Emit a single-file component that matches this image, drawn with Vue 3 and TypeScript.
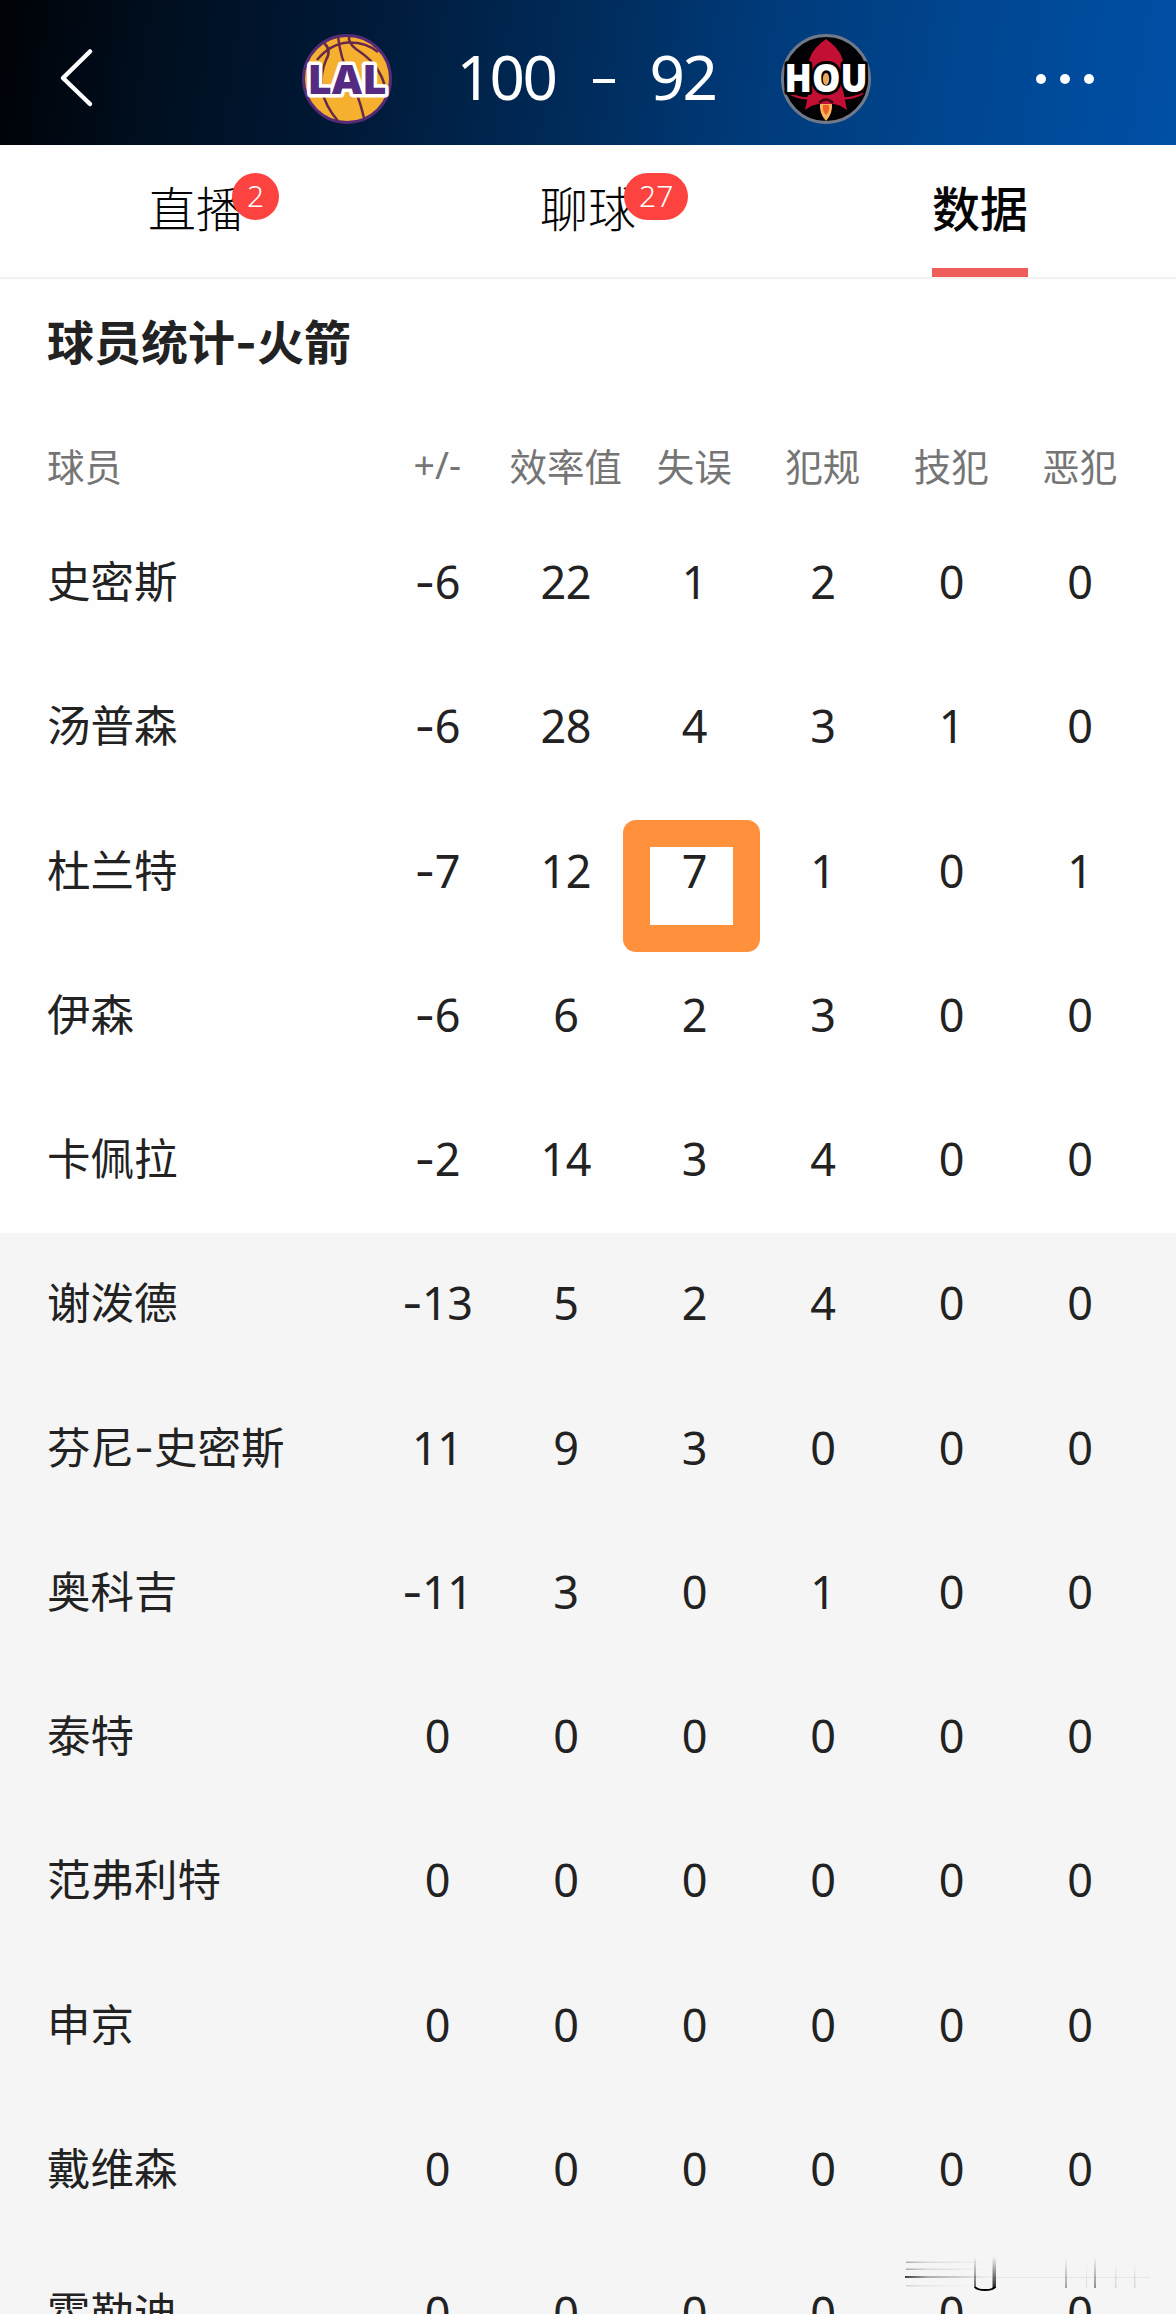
<template>
    <main class="game-page">
        <header class="score-header">
            <svg class="back-icon" viewBox="0 0 40 64">
                <path d="M33 6.5 6 33l27 26" />
            </svg>
            <div class="scoreboard">
                <svg class="team-logo" viewBox="0 0 90 90">
                    <circle cx="45" cy="45" r="43.5" fill="#f5b02f" stroke="#552b78" stroke-width="3" />
                    <g fill="none" stroke="#66294a" stroke-width="2.5">
                        <path d="M15 26Q28 10 46 8.5Q64 8 76 18" />
                        <path d="M22 9Q30 16 24 26Q18 40 20 56Q23 72 36 87" />
                        <path d="M36 2Q38 22 47 42Q57 62 62 84" />
                        <path d="M47 2Q46 9 54 15Q72 27 77 38Q83 48 83 56" />
                    </g>
                    <text class="logo-text lal" x="45" y="60" textLength="79" lengthAdjust="spacingAndGlyphs">LAL</text>
                </svg>
                <div class="score">
                    <span class="points">100</span>
                    <span class="divider"></span>
                    <span class="points">92</span>
                </div>
                <svg class="team-logo" viewBox="0 0 90 90">
                    <circle cx="45" cy="45" r="43.5" fill="#020103" stroke="#70798a" stroke-width="3" />
                    <path d="M45 5Q24 20 28 38V56L24 76Q32 70 38 70H52Q58 70 66 76L62 56V38Q66 20 45 5Z" fill="#c40f34" />
                    <path d="M8 59Q18 65 28 64M82 59Q72 65 62 64" fill="none" stroke="#c40f34" stroke-width="2.5" />
                    <path d="M38 69Q45 62 52 69" fill="none" stroke="#3b0714" stroke-width="2.5" />
                    <path d="M39 70H51Q52 79 45 87Q38 79 39 70Z" fill="#f8b45e" />
                    <path d="M42 71H48Q49 77 45 81Q41 77 42 71Z" fill="#ee6124" />
                    <text class="logo-text hou" x="45" y="58" textLength="83" lengthAdjust="spacingAndGlyphs">HOU</text>
                    <ellipse cx="45" cy="45" rx="3.2" ry="6" fill="#e5a95c" />
                </svg>
            </div>
            <div class="more">
                <i v-for="n in 3" :key="n"></i>
            </div>
        </header>

        <nav class="tabs">
            <a
                v-for="tab in tabs"
                :key="tab.label"
                class="tab"
                :class="{ active: tab.active }"
            >
                <span class="tab-label">
                    {{ tab.label }}
                    <span class="badge" v-if="tab.badge">{{ tab.badge }}</span>
                </span>
            </a>
        </nav>

        <section class="stats">
            <h1>球员统计<span class="dash">-</span>火箭</h1>
            <div class="row head">
                <span class="name">球员</span>
                <span v-for="column in columns" :key="column">{{ column }}</span>
            </div>
            <div
                v-for="player in players"
                :key="player.name"
                class="row"
                :class="{ bench: !player.starter }"
            >
                <span class="name">
                    <template v-for="(part, i) in player.name.split('-')" :key="i"><span v-if="i" class="dash">-</span>{{ part }}</template>
                </span>
                <span
                    v-for="(value, i) in player.stats"
                    :key="i"
                    :class="{ marked: player.marked === i }"
                ><span v-if="value < 0" class="dash">-</span>{{ Math.abs(value) }}</span>
            </div>
        </section>

        <svg class="watermark" viewBox="0 0 260 44">
            <defs>
                <linearGradient id="fade-x">
                    <stop offset="0" stop-color="#000" stop-opacity="0.75" />
                    <stop offset="0.25" stop-color="#000" stop-opacity="0.3" />
                    <stop offset="1" stop-color="#000" stop-opacity="0" />
                </linearGradient>
                <linearGradient id="fade-y" x1="0" y1="0" x2="0" y2="1">
                    <stop offset="0" stop-color="#000" stop-opacity="0" />
                    <stop offset="1" stop-color="#000" stop-opacity="0.85" />
                </linearGradient>
            </defs>
            <g fill="url(#fade-x)">
                <rect x="6" y="10.5" width="80" height="1.5" opacity="0.4" />
                <rect x="6" y="17.5" width="80" height="1.5" opacity="0.4" />
                <rect x="5" y="25" width="90" height="2" />
                <rect x="6" y="34" width="70" height="1.5" opacity="0.2" />
            </g>
            <rect x="95" y="26" width="155" height="1" opacity="0.06" />
            <g fill="url(#fade-y)">
                <rect x="74" y="6" width="2" height="31" opacity="0.7" />
                <rect x="92.5" y="6" width="3.5" height="31" />
                <rect x="165" y="6" width="2" height="31" opacity="0.4" />
                <rect x="186" y="10" width="1" height="27" opacity="0.12" />
                <rect x="194" y="6" width="2" height="31" opacity="0.5" />
                <rect x="215" y="10" width="1.5" height="27" opacity="0.15" />
                <rect x="234" y="10" width="1.5" height="27" opacity="0.15" />
            </g>
            <path d="M75 36Q77 39 85 39Q93 39 95 36" fill="none" stroke="#000" stroke-width="2" />
        </svg>
    </main>
</template>

<script setup lang="ts">
interface Tab {
    label: string;
    badge?: number;
    active?: boolean;
}

interface Player {
    name: string;
    stats: number[];
    starter?: boolean;
    marked?: number;
}

const tabs: Tab[] = [
    { label: '直播', badge: 2 },
    { label: '聊球', badge: 27 },
    { label: '数据', active: true },
];

const columns = ['+/-', '效率值', '失误', '犯规', '技犯', '恶犯'];

const players: Player[] = [
    { name: '史密斯', stats: [-6, 22, 1, 2, 0, 0], starter: true },
    { name: '汤普森', stats: [-6, 28, 4, 3, 1, 0], starter: true },
    { name: '杜兰特', stats: [-7, 12, 7, 1, 0, 1], starter: true, marked: 2 },
    { name: '伊森', stats: [-6, 6, 2, 3, 0, 0], starter: true },
    { name: '卡佩拉', stats: [-2, 14, 3, 4, 0, 0], starter: true },
    { name: '谢泼德', stats: [-13, 5, 2, 4, 0, 0] },
    { name: '芬尼-史密斯', stats: [11, 9, 3, 0, 0, 0] },
    { name: '奥科吉', stats: [-11, 3, 0, 1, 0, 0] },
    { name: '泰特', stats: [0, 0, 0, 0, 0, 0] },
    { name: '范弗利特', stats: [0, 0, 0, 0, 0, 0] },
    { name: '申京', stats: [0, 0, 0, 0, 0, 0] },
    { name: '戴维森', stats: [0, 0, 0, 0, 0, 0] },
    { name: '霍勒迪', stats: [0, 0, 0, 0, 0, 0] },
];
</script>

<style>
body {
    margin: 0;
    background: #fff;
}
</style>

<style scoped>
.game-page {
    position: relative;
    width: 1176px;
    height: 2314px;
    overflow: hidden;
    background: #fefefe;
    color: #222;
    font-family: "Noto Sans", "Noto Sans CJK SC", sans-serif;
}

.score-header {
    display: flex;
    align-items: center;
    justify-content: space-between;
    box-sizing: border-box;
    height: 145px;
    padding: 12px 82px 0 57px;
    background: linear-gradient(98deg, #000206 0%, #000f20 14%, #001937 30%, #002a58 48%, #003b7b 65%, #00458f 80%, #0050a7 100%);
}

.back-icon {
    width: 40px;
    height: 64px;
    margin-bottom: 4px;
    fill: none;
    stroke: #fff;
    stroke-width: 4.5;
    stroke-linecap: round;
    stroke-linejoin: round;
}

.scoreboard {
    display: flex;
    align-items: center;
    justify-content: space-between;
    width: 569px;
    margin-left: 39px;
}

.team-logo {
    width: 90px;
    height: 90px;
    overflow: visible;
}

.logo-text {
    font-family: "Open Sans", "Noto Sans", sans-serif;
    font-weight: 800;
    text-anchor: middle;
    paint-order: stroke;
    stroke-linejoin: round;
}

.lal {
    font-size: 41px;
    fill: #552b82;
    stroke: #fff;
    stroke-width: 7px;
}

.hou {
    font-size: 38px;
    fill: #fff;
    stroke: #000;
    stroke-width: 6px;
}

.score {
    display: flex;
    align-items: center;
    height: 90px;
    color: #fff;
    font-size: 62px;
    line-height: 84px;
}

.points {
    margin-top: -6px;
    letter-spacing: -2.5px;
}

.divider {
    width: 22px;
    height: 4px;
    margin: 4px 34px 0 38px;
    background: #fff;
}

.more {
    display: flex;
    gap: 14px;
}

.more i {
    width: 10px;
    height: 10px;
    border-radius: 50%;
    background: #fff;
}

.tabs {
    display: grid;
    grid-template-columns: repeat(3, 1fr);
    height: 132px;
    border-bottom: 2px solid #f2f2f4;
}

.tab {
    display: flex;
    justify-content: center;
    color: #050505;
    font-family: "Noto Sans CJK SC", sans-serif;
    font-size: 48px;
    font-weight: 300;
    line-height: 123px;
}

.tab-label {
    position: relative;
    box-sizing: border-box;
    height: 132px;
}

.active .tab-label {
    border-bottom: 9px solid #ed5e5a;
    font-weight: 500;
}

.badge {
    position: absolute;
    top: 28px;
    left: calc(100% - 12px);
    min-width: 17px;
    height: 47px;
    padding: 0 15px;
    border-radius: 24px;
    background: #fd433f;
    color: #fff;
    font-family: "Noto Sans", sans-serif;
    font-size: 30px;
    line-height: 46px;
    text-align: center;
}

.stats h1 {
    margin: 0;
    padding: 30px 48px 0 47px;
    font-size: 47px;
    font-weight: 700;
    line-height: 66px;
}

.dash {
    font-family: Inter, sans-serif;
    line-height: 1;
}

.row {
    display: grid;
    grid-template-columns: 1fr repeat(6, 128.5px);
    align-items: center;
    box-sizing: border-box;
    height: 144.25px;
    padding: 0 32px 5px 47px;
    font-size: 45px;
    text-align: center;
    letter-spacing: -0.5px;
}

.row .name {
    padding-bottom: 4px;
    font-size: 43.5px;
    letter-spacing: 0;
    text-align: left;
}

.row.head {
    height: 137px;
    padding-top: 46px;
    color: #757575;
    font-size: 37.5px;
    letter-spacing: 0;
    white-space: nowrap;
}

.row.head .name {
    padding-bottom: 0;
    font-size: 37.5px;
}

.bench {
    background: #f5f5f5;
}

.marked {
    position: relative;
}

/* hand-drawn frame over the turnover count */
.marked::after {
    content: "";
    position: absolute;
    top: -20px;
    left: -7px;
    width: 83px;
    height: 78px;
    border: 27px solid #ff903c;
    border-radius: 13px;
}

.watermark {
    position: absolute;
    right: 16px;
    bottom: 19px;
    width: 260px;
    height: 44px;
}
</style>
